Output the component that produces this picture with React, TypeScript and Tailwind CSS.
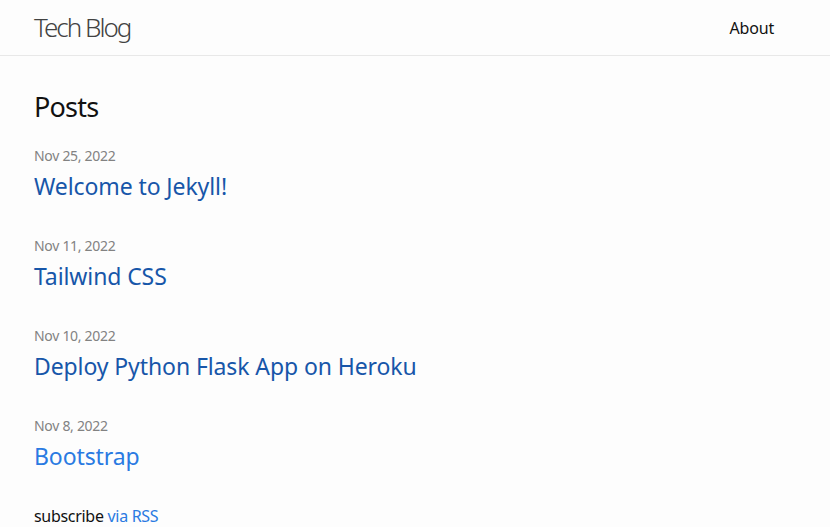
const posts = [
  { date: 'Nov 25, 2022', title: 'Welcome to Jekyll!', visited: true },
  { date: 'Nov 11, 2022', title: 'Tailwind CSS', visited: true },
  { date: 'Nov 10, 2022', title: 'Deploy Python Flask App on Heroku', visited: true },
  { date: 'Nov 8, 2022', title: 'Bootstrap', visited: false },
]

export default function App() {
  return (
    <div className="min-h-[527px] bg-[#fdfdfd] text-[#111] font-['Segoe_UI','Noto_Sans',sans-serif]">
      {/* Header */}
      <header className="border-b border-[#e8e8e8]">
        <div className="flex h-[55px] items-center justify-between pl-[34px] pr-[56px]">
          <a className="text-[26px] font-light tracking-[-2px] text-[#424242]">Tech Blog</a>
          <nav>
            <a className="text-[16px] tracking-[-0.2px] text-[#111]">About</a>
          </nav>
        </div>
      </header>

      {/* Posts */}
      <main className="px-[34px] pt-[30px]">
        <h2 className="mb-[17px] text-[27px] leading-[42px] tracking-[-0.8px]">Posts</h2>
        <ul className="flex flex-col gap-[31px]">
          {posts.map((post) => (
            <li key={post.title} className="flex flex-col gap-[2px]">
              <span className="text-[14px] leading-[21px] tracking-[-0.3px] text-[#828282]">{post.date}</span>
              <h3>
                <a className={`text-[23px] leading-[36px] tracking-[-0.1px] ${post.visited ? 'text-[#1756a9]' : 'text-[#2a7ae2]'}`}>
                  {post.title}
                </a>
              </h3>
            </li>
          ))}
        </ul>
        <p className="mt-[30px] text-[16px] leading-[24px] tracking-[-0.3px]">
          subscribe <a className="text-[#2a7ae2]">via RSS</a>
        </p>
      </main>
    </div>
  )
}
